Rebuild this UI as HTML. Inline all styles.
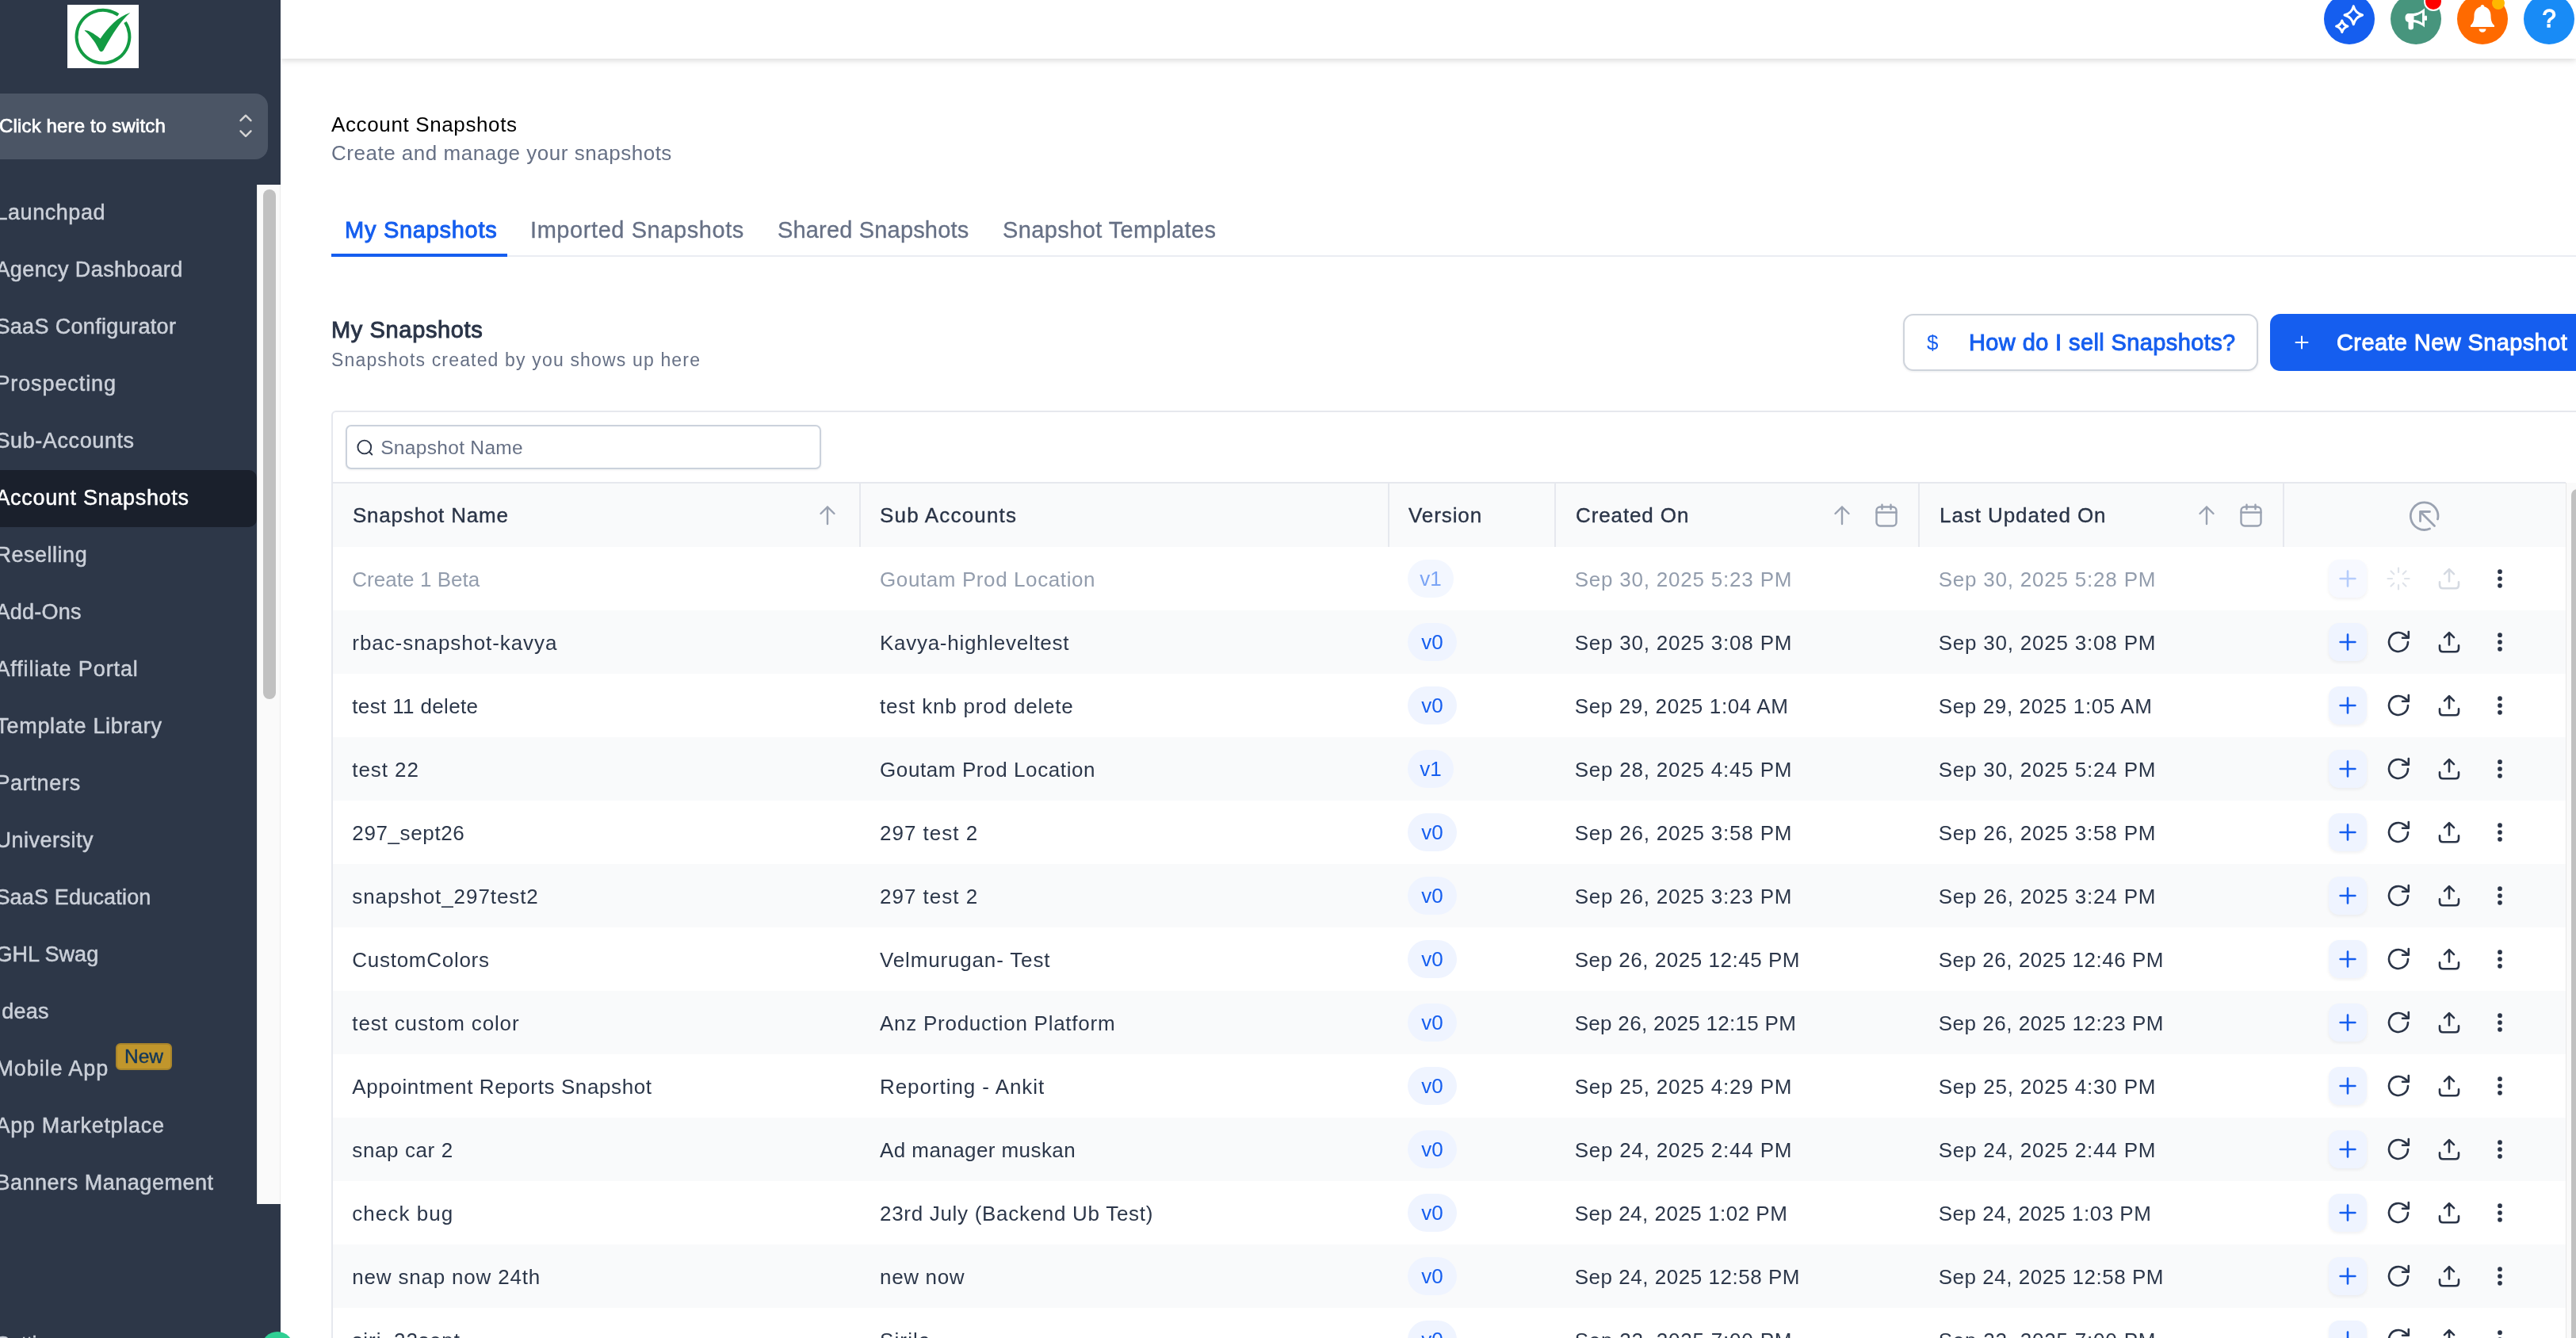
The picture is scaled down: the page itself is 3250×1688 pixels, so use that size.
<!DOCTYPE html>
<html lang="en"><head><meta charset="utf-8"><title>Account Snapshots</title>
<style>
*{box-sizing:border-box;margin:0;padding:0}
html,body{width:3250px;height:1688px;overflow:hidden;background:#fff}
body{position:relative;font-family:"Liberation Sans",sans-serif;color:#2a3447;}
#root{position:absolute;left:0;top:0;width:3250px;height:1688px;overflow:hidden;will-change:transform}
.abs{position:absolute}
.t{white-space:nowrap;display:inline-block}
#side{position:absolute;left:0;top:0;width:354px;height:1688px;background:#2d3748;overflow:hidden}
#logo{position:absolute;left:85px;top:6px;width:90px;height:80px;background:#fff}
#switch{position:absolute;left:-20px;top:118px;width:358px;height:83px;border-radius:16px;background:#4b5565}
#switch .lbl{position:absolute;left:19px;top:-1.4px;height:83px;line-height:83px;font-size:24px;color:#fff;-webkit-text-stroke:0.7px #fff}
.nav{position:absolute;left:-5.6px;height:72px;line-height:72px;font-size:27px;color:#cbd0d9;-webkit-text-stroke:0.5px #cbd0d9}
#active{position:absolute;left:-20px;top:593.4px;width:344px;height:71.6px;border-radius:10px;background:#1a202c}
.nav.on{color:#fff;-webkit-text-stroke:0.5px #fff}
#strack{position:absolute;left:324px;top:233px;width:30px;height:1286px;background:#fafafa;border-left:1px solid #e9e9e9;border-right:1px solid #ececec}
#sthumb{position:absolute;left:332px;top:239px;width:16px;height:643px;border-radius:8px;background:#c1c1c1}
#newb{position:absolute;left:146px;top:1316px;width:71px;height:34px;border-radius:6px;background:#c1962c;border:2px solid #a8842b;color:#12375a;font-size:24.5px;line-height:30px;text-align:center;-webkit-text-stroke:0.4px #12375a}
#head{position:absolute;left:354px;top:0;width:2896px;height:74px;background:#fff;box-shadow:0 2px 8px rgba(0,0,0,.16)}
.circ{position:absolute;top:-8px;width:64px;height:64px;border-radius:50%}
.ln{position:absolute;white-space:nowrap}

.title{left:418px;top:142px;height:30px;line-height:30px;font-size:26px;color:#000}
.sub{left:418px;top:178px;height:30px;line-height:30px;font-size:26px;color:#667085}
.tab{top:272px;height:36px;line-height:36px;font-size:29px;color:#667085;-webkit-text-stroke:0.3px #667085}
.tab.on{color:#155eef;-webkit-text-stroke:0.95px #155eef}
.h2{left:418px;top:398px;height:36px;line-height:36px;font-size:29px;color:#2a3447;-webkit-text-stroke:0.95px #2a3447}
.sub2{left:418px;top:439px;height:30px;line-height:30px;font-size:23px;color:#667085}
#btn1{position:absolute;left:2400.5px;top:396px;width:448px;height:72px;border:2px solid #cfd4dc;border-radius:13px;background:#fff;box-shadow:0 1px 3px rgba(16,24,40,.08)}
#btn2{position:absolute;left:2864px;top:396px;width:420px;height:72px;border-radius:13px;background:#155eef}
.btxt{top:414px;height:36px;line-height:36px;font-size:29px}
#card{position:absolute;left:418px;top:518px;width:2860px;height:1300px;border:2px solid #e6e8ee;border-radius:6px}
#search{position:absolute;left:436px;top:536px;width:600px;height:56px;border:2px solid #cbd2dc;border-radius:7px;background:#fff;box-shadow:0 1px 3px rgba(16,24,40,.07)}
.ph{left:480.2px;top:549.8px;height:30px;line-height:30px;font-size:24.5px;color:#667085}
#thead{position:absolute;left:420px;top:608px;width:2817px;height:82px;background:#f9fafb;border-top:2px solid #e6e8ee}
.vsep{position:absolute;top:610px;width:2px;height:80px;background:#e6e8ee}
.th{top:634px;height:32px;line-height:32px;font-size:26px;color:#2a3447;-webkit-text-stroke:0.35px #2a3447}
.row{position:absolute;left:420px;width:2817px;height:80px}
.row.alt{background:#f9fafb}
.td{height:32px;line-height:32px;font-size:26px;color:#2c374a}
.dis .td{color:#939dad}
.pill{position:absolute;height:48px;border-radius:24px;background:#eff4ff;color:#155eef;font-size:26px;line-height:48px;text-align:center}
.dis .pill{color:#7ba4f5;background:#f3f7ff}
.plus{position:absolute;width:48px;height:48px;border-radius:13px;background:#eff4ff;box-shadow:0 2px 4px rgba(16,24,40,.06)}
.dis .plus{background:#f7f9ff}
#vtrack{position:absolute;left:3237px;top:609px;width:13px;height:1100px;background:#fafafa;border-left:1px solid #e8e8e8}
#vthumb{position:absolute;left:3244px;top:617px;width:16px;height:1200px;border-radius:8px;background:#c1c1c1}
</style></head>
<body>
<div id="root"><div class="ln title"><span id="title" class="t " style="letter-spacing:0.625px;">Account Snapshots</span></div><div class="ln sub"><span id="sub" class="t " style="letter-spacing:0.516px;">Create and manage your snapshots</span></div><div class="abs" style="left:418px;top:322px;width:2900px;height:2px;background:#eaecf2"></div><div class="abs" style="left:418px;top:320px;width:222px;height:4px;background:#155eef"></div><div class="ln tab on" style="left:435px"><span id="tab0" class="t " style="letter-spacing:0.727px;">My Snapshots</span></div><div class="ln tab" style="left:669px"><span id="tab1" class="t " style="letter-spacing:0.576px;">Imported Snapshots</span></div><div class="ln tab" style="left:981px"><span id="tab2" class="t " style="letter-spacing:0.173px;">Shared Snapshots</span></div><div class="ln tab" style="left:1265px"><span id="tab3" class="t " style="letter-spacing:0.400px;">Snapshot Templates</span></div><div class="ln h2"><span id="h2" class="t " style="letter-spacing:0.636px;">My Snapshots</span></div><div class="ln sub2"><span id="sub2" class="t " style="letter-spacing:1.162px;">Snapshots created by you shows up here</span></div><div id="btn1"></div><div id="btn2"></div><div class="ln btxt" style="left:2431px;color:#155eef;font-weight:normal;font-size:26px">$</div><div class="ln btxt" style="left:2484px;color:#155eef;-webkit-text-stroke:0.95px #155eef"><span id="b1" class="t " style="letter-spacing:0.391px;">How do I sell Snapshots?</span></div><svg class="abs" style="left:2892px;top:420px" width="24" height="24" viewBox="0 0 24 24" fill="none" stroke="#fff" stroke-width="2" stroke-linecap="round"><path d="M12 4.5 L12 19.5 M4.5 12 L19.5 12"/></svg><div class="ln btxt" style="left:2948px;color:#fff;-webkit-text-stroke:0.95px #fff"><span id="b2" class="t " style="letter-spacing:0.389px;">Create New Snapshot</span></div><div id="card"></div><div id="search"></div><svg class="abs" style="left:448px;top:552px" width="26" height="26" viewBox="0 0 26 26" fill="none" stroke="#2a3447" stroke-width="1.9" stroke-linecap="round"><circle cx="11.8" cy="12" r="8.4"/><path d="M18 18.2 L21.3 21.5"/></svg><div class="ln ph"><span id="ph" class="t " style="letter-spacing:0.317px;">Snapshot Name</span></div><div id="thead"></div><div class="vsep" style="left:1084px"></div><div class="vsep" style="left:1751px"></div><div class="vsep" style="left:1961px"></div><div class="vsep" style="left:2420px"></div><div class="vsep" style="left:2880px"></div><div class="ln th" style="left:445px"><span id="th0" class="t " style="letter-spacing:0.783px;">Snapshot Name</span></div><div class="ln th" style="left:1110px"><span id="th1" class="t " style="letter-spacing:1.182px;">Sub Accounts</span></div><div class="ln th" style="left:1777px"><span id="th2" class="t " style="letter-spacing:0.900px;">Version</span></div><div class="ln th" style="left:1988px"><span id="th3" class="t " style="letter-spacing:0.889px;">Created On</span></div><div class="ln th" style="left:2447px"><span id="th4" class="t " style="letter-spacing:0.929px;">Last Updated On</span></div><svg class="abs" style="left:1030px;top:636px" width="28" height="28" viewBox="0 0 28 28" fill="none" stroke="#9aa2b1" stroke-width="2.4" stroke-linecap="round" stroke-linejoin="round"><path d="M14 25 L14 3.5 M5.5 12 L14 3.5 L22.5 12"/></svg><svg class="abs" style="left:2310px;top:636px" width="28" height="28" viewBox="0 0 28 28" fill="none" stroke="#9aa2b1" stroke-width="2.4" stroke-linecap="round" stroke-linejoin="round"><path d="M14 25 L14 3.5 M5.5 12 L14 3.5 L22.5 12"/></svg><svg class="abs" style="left:2365px;top:634px" width="30" height="32" viewBox="0 0 30 32" fill="none" stroke="#9aa2b1" stroke-width="2.4" stroke-linecap="round" stroke-linejoin="round"><rect x="2.5" y="5.5" width="25" height="24" rx="4.5"/><path d="M2.5 12.5 L27.5 12.5 M9.5 2.8 L9.5 8.2 M20.5 2.8 L20.5 8.2"/></svg><svg class="abs" style="left:2770px;top:636px" width="28" height="28" viewBox="0 0 28 28" fill="none" stroke="#9aa2b1" stroke-width="2.4" stroke-linecap="round" stroke-linejoin="round"><path d="M14 25 L14 3.5 M5.5 12 L14 3.5 L22.5 12"/></svg><svg class="abs" style="left:2825px;top:634px" width="30" height="32" viewBox="0 0 30 32" fill="none" stroke="#9aa2b1" stroke-width="2.4" stroke-linecap="round" stroke-linejoin="round"><rect x="2.5" y="5.5" width="25" height="24" rx="4.5"/><path d="M2.5 12.5 L27.5 12.5 M9.5 2.8 L9.5 8.2 M20.5 2.8 L20.5 8.2"/></svg><svg class="abs" style="left:3038px;top:630px" width="42" height="42" viewBox="0 0 42 42" fill="none" stroke="#9aa2b1" stroke-width="2.8" stroke-linecap="round" stroke-linejoin="round"><path d="M27.5 37 A17.3 17.3 0 1 1 37.5 25"/><path d="M33.5 33.5 L15.5 15.5 M15.5 27.5 L15.5 15.5 L27.5 15.5"/></svg><div class="row dis" style="top:690px"><div class="ln td" style="left:24.30000000000001px;top:24.5px"><span id="r0c0" class="t " style="letter-spacing:0.050px;">Create 1 Beta</span></div><div class="ln td" style="left:690px;top:24.5px"><span id="r0c1" class="t " style="letter-spacing:0.600px;">Goutam Prod Location</span></div><div class="pill" style="left:1356px;top:16px;width:58px">v1</div><div class="ln td" style="left:1566.7px;top:24.5px"><span id="r0c3" class="t " style="letter-spacing:0.789px;">Sep 30, 2025 5:23 PM</span></div><div class="ln td" style="left:2025.6999999999998px;top:24.5px"><span id="r0c4" class="t " style="letter-spacing:0.789px;">Sep 30, 2025 5:28 PM</span></div><div class="plus" style="left:2518px;top:16px"><svg width="48" height="48" viewBox="0 0 48 48" fill="none" stroke="#b5ccfb" stroke-width="2.6" stroke-linecap="round"><path d="M24 14.6 L24 33.4 M14.6 24 L33.4 24"/></svg></div><svg class="abs" style="left:2590px;top:24px" width="32" height="32" viewBox="0 0 32 32" fill="none" stroke="#dfe3ea" stroke-width="2.2" stroke-linecap="round"><path d="M16 2.5 L16 8 M16 24 L16 29.5 M2.5 16 L8 16 M24 16 L29.5 16 M6.5 6.5 L10.3 10.3 M21.7 21.7 L25.5 25.5 M6.5 25.5 L10.3 21.7 M21.7 10.3 L25.5 6.5"/></svg><svg class="abs" style="left:2654px;top:24px" width="32" height="32" viewBox="0 0 32 32" fill="none" stroke="#d5dae2" stroke-width="2.6" stroke-linecap="round" stroke-linejoin="round"><path d="M16 19.5 L16 4.2 M10 10.2 L16 4.2 L22 10.2"/><path d="M4 20.2 L4 24 Q4 28.2 8.2 28.2 L23.8 28.2 Q28 28.2 28 24 L28 20.2"/></svg><svg class="abs" style="left:2726px;top:24px" width="16" height="32" viewBox="0 0 16 32" fill="#2a3447"><circle cx="8" cy="7.2" r="2.85"/><circle cx="8" cy="16" r="2.85"/><circle cx="8" cy="24.8" r="2.85"/></svg></div><div class="row alt" style="top:770px"><div class="ln td" style="left:24.30000000000001px;top:24.5px"><span id="r1c0" class="t " style="letter-spacing:0.933px;">rbac-snapshot-kavya</span></div><div class="ln td" style="left:690px;top:24.5px"><span id="r1c1" class="t " style="letter-spacing:0.722px;">Kavya-highleveltest</span></div><div class="pill" style="left:1356px;top:16px;width:62px">v0</div><div class="ln td" style="left:1566.7px;top:24.5px"><span id="r1c3" class="t " style="letter-spacing:0.789px;">Sep 30, 2025 3:08 PM</span></div><div class="ln td" style="left:2025.6999999999998px;top:24.5px"><span id="r1c4" class="t " style="letter-spacing:0.789px;">Sep 30, 2025 3:08 PM</span></div><div class="plus" style="left:2518px;top:16px"><svg width="48" height="48" viewBox="0 0 48 48" fill="none" stroke="#155eef" stroke-width="2.6" stroke-linecap="round"><path d="M24 14.6 L24 33.4 M14.6 24 L33.4 24"/></svg></div><svg class="abs" style="left:2590px;top:24px" width="32" height="32" viewBox="0 0 32 32" fill="none" stroke="#2a3447" stroke-width="2.6" stroke-linecap="round" stroke-linejoin="round"><path d="M28 16 A12 12 0 1 1 23.2 6.4 L28.5 10.5"/><path d="M28.8 3 L28.8 10.8 L21 10.8"/></svg><svg class="abs" style="left:2654px;top:24px" width="32" height="32" viewBox="0 0 32 32" fill="none" stroke="#2a3447" stroke-width="2.6" stroke-linecap="round" stroke-linejoin="round"><path d="M16 19.5 L16 4.2 M10 10.2 L16 4.2 L22 10.2"/><path d="M4 20.2 L4 24 Q4 28.2 8.2 28.2 L23.8 28.2 Q28 28.2 28 24 L28 20.2"/></svg><svg class="abs" style="left:2726px;top:24px" width="16" height="32" viewBox="0 0 16 32" fill="#2a3447"><circle cx="8" cy="7.2" r="2.85"/><circle cx="8" cy="16" r="2.85"/><circle cx="8" cy="24.8" r="2.85"/></svg></div><div class="row" style="top:850px"><div class="ln td" style="left:24.30000000000001px;top:24.5px"><span id="r2c0" class="t " style="letter-spacing:0.354px;">test 11 delete</span></div><div class="ln td" style="left:690px;top:24.5px"><span id="r2c1" class="t " style="letter-spacing:0.811px;">test knb prod delete</span></div><div class="pill" style="left:1356px;top:16px;width:62px">v0</div><div class="ln td" style="left:1566.7px;top:24.5px"><span id="r2c3" class="t " style="letter-spacing:0.632px;">Sep 29, 2025 1:04 AM</span></div><div class="ln td" style="left:2025.6999999999998px;top:24.5px"><span id="r2c4" class="t " style="letter-spacing:0.632px;">Sep 29, 2025 1:05 AM</span></div><div class="plus" style="left:2518px;top:16px"><svg width="48" height="48" viewBox="0 0 48 48" fill="none" stroke="#155eef" stroke-width="2.6" stroke-linecap="round"><path d="M24 14.6 L24 33.4 M14.6 24 L33.4 24"/></svg></div><svg class="abs" style="left:2590px;top:24px" width="32" height="32" viewBox="0 0 32 32" fill="none" stroke="#2a3447" stroke-width="2.6" stroke-linecap="round" stroke-linejoin="round"><path d="M28 16 A12 12 0 1 1 23.2 6.4 L28.5 10.5"/><path d="M28.8 3 L28.8 10.8 L21 10.8"/></svg><svg class="abs" style="left:2654px;top:24px" width="32" height="32" viewBox="0 0 32 32" fill="none" stroke="#2a3447" stroke-width="2.6" stroke-linecap="round" stroke-linejoin="round"><path d="M16 19.5 L16 4.2 M10 10.2 L16 4.2 L22 10.2"/><path d="M4 20.2 L4 24 Q4 28.2 8.2 28.2 L23.8 28.2 Q28 28.2 28 24 L28 20.2"/></svg><svg class="abs" style="left:2726px;top:24px" width="16" height="32" viewBox="0 0 16 32" fill="#2a3447"><circle cx="8" cy="7.2" r="2.85"/><circle cx="8" cy="16" r="2.85"/><circle cx="8" cy="24.8" r="2.85"/></svg></div><div class="row alt" style="top:930px"><div class="ln td" style="left:24.30000000000001px;top:24.5px"><span id="r3c0" class="t " style="letter-spacing:0.933px;">test 22</span></div><div class="ln td" style="left:690px;top:24.5px"><span id="r3c1" class="t " style="letter-spacing:0.600px;">Goutam Prod Location</span></div><div class="pill" style="left:1356px;top:16px;width:58px">v1</div><div class="ln td" style="left:1566.7px;top:24.5px"><span id="r3c3" class="t " style="letter-spacing:0.789px;">Sep 28, 2025 4:45 PM</span></div><div class="ln td" style="left:2025.6999999999998px;top:24.5px"><span id="r3c4" class="t " style="letter-spacing:0.789px;">Sep 30, 2025 5:24 PM</span></div><div class="plus" style="left:2518px;top:16px"><svg width="48" height="48" viewBox="0 0 48 48" fill="none" stroke="#155eef" stroke-width="2.6" stroke-linecap="round"><path d="M24 14.6 L24 33.4 M14.6 24 L33.4 24"/></svg></div><svg class="abs" style="left:2590px;top:24px" width="32" height="32" viewBox="0 0 32 32" fill="none" stroke="#2a3447" stroke-width="2.6" stroke-linecap="round" stroke-linejoin="round"><path d="M28 16 A12 12 0 1 1 23.2 6.4 L28.5 10.5"/><path d="M28.8 3 L28.8 10.8 L21 10.8"/></svg><svg class="abs" style="left:2654px;top:24px" width="32" height="32" viewBox="0 0 32 32" fill="none" stroke="#2a3447" stroke-width="2.6" stroke-linecap="round" stroke-linejoin="round"><path d="M16 19.5 L16 4.2 M10 10.2 L16 4.2 L22 10.2"/><path d="M4 20.2 L4 24 Q4 28.2 8.2 28.2 L23.8 28.2 Q28 28.2 28 24 L28 20.2"/></svg><svg class="abs" style="left:2726px;top:24px" width="16" height="32" viewBox="0 0 16 32" fill="#2a3447"><circle cx="8" cy="7.2" r="2.85"/><circle cx="8" cy="16" r="2.85"/><circle cx="8" cy="24.8" r="2.85"/></svg></div><div class="row" style="top:1010px"><div class="ln td" style="left:24.30000000000001px;top:24.5px"><span id="r4c0" class="t " style="letter-spacing:0.622px;">297_sept26</span></div><div class="ln td" style="left:690px;top:24.5px"><span id="r4c1" class="t " style="letter-spacing:1.000px;">297 test 2</span></div><div class="pill" style="left:1356px;top:16px;width:62px">v0</div><div class="ln td" style="left:1566.7px;top:24.5px"><span id="r4c3" class="t " style="letter-spacing:0.789px;">Sep 26, 2025 3:58 PM</span></div><div class="ln td" style="left:2025.6999999999998px;top:24.5px"><span id="r4c4" class="t " style="letter-spacing:0.789px;">Sep 26, 2025 3:58 PM</span></div><div class="plus" style="left:2518px;top:16px"><svg width="48" height="48" viewBox="0 0 48 48" fill="none" stroke="#155eef" stroke-width="2.6" stroke-linecap="round"><path d="M24 14.6 L24 33.4 M14.6 24 L33.4 24"/></svg></div><svg class="abs" style="left:2590px;top:24px" width="32" height="32" viewBox="0 0 32 32" fill="none" stroke="#2a3447" stroke-width="2.6" stroke-linecap="round" stroke-linejoin="round"><path d="M28 16 A12 12 0 1 1 23.2 6.4 L28.5 10.5"/><path d="M28.8 3 L28.8 10.8 L21 10.8"/></svg><svg class="abs" style="left:2654px;top:24px" width="32" height="32" viewBox="0 0 32 32" fill="none" stroke="#2a3447" stroke-width="2.6" stroke-linecap="round" stroke-linejoin="round"><path d="M16 19.5 L16 4.2 M10 10.2 L16 4.2 L22 10.2"/><path d="M4 20.2 L4 24 Q4 28.2 8.2 28.2 L23.8 28.2 Q28 28.2 28 24 L28 20.2"/></svg><svg class="abs" style="left:2726px;top:24px" width="16" height="32" viewBox="0 0 16 32" fill="#2a3447"><circle cx="8" cy="7.2" r="2.85"/><circle cx="8" cy="16" r="2.85"/><circle cx="8" cy="24.8" r="2.85"/></svg></div><div class="row alt" style="top:1090px"><div class="ln td" style="left:24.30000000000001px;top:24.5px"><span id="r5c0" class="t " style="letter-spacing:0.925px;">snapshot_297test2</span></div><div class="ln td" style="left:690px;top:24.5px"><span id="r5c1" class="t " style="letter-spacing:1.000px;">297 test 2</span></div><div class="pill" style="left:1356px;top:16px;width:62px">v0</div><div class="ln td" style="left:1566.7px;top:24.5px"><span id="r5c3" class="t " style="letter-spacing:0.789px;">Sep 26, 2025 3:23 PM</span></div><div class="ln td" style="left:2025.6999999999998px;top:24.5px"><span id="r5c4" class="t " style="letter-spacing:0.789px;">Sep 26, 2025 3:24 PM</span></div><div class="plus" style="left:2518px;top:16px"><svg width="48" height="48" viewBox="0 0 48 48" fill="none" stroke="#155eef" stroke-width="2.6" stroke-linecap="round"><path d="M24 14.6 L24 33.4 M14.6 24 L33.4 24"/></svg></div><svg class="abs" style="left:2590px;top:24px" width="32" height="32" viewBox="0 0 32 32" fill="none" stroke="#2a3447" stroke-width="2.6" stroke-linecap="round" stroke-linejoin="round"><path d="M28 16 A12 12 0 1 1 23.2 6.4 L28.5 10.5"/><path d="M28.8 3 L28.8 10.8 L21 10.8"/></svg><svg class="abs" style="left:2654px;top:24px" width="32" height="32" viewBox="0 0 32 32" fill="none" stroke="#2a3447" stroke-width="2.6" stroke-linecap="round" stroke-linejoin="round"><path d="M16 19.5 L16 4.2 M10 10.2 L16 4.2 L22 10.2"/><path d="M4 20.2 L4 24 Q4 28.2 8.2 28.2 L23.8 28.2 Q28 28.2 28 24 L28 20.2"/></svg><svg class="abs" style="left:2726px;top:24px" width="16" height="32" viewBox="0 0 16 32" fill="#2a3447"><circle cx="8" cy="7.2" r="2.85"/><circle cx="8" cy="16" r="2.85"/><circle cx="8" cy="24.8" r="2.85"/></svg></div><div class="row" style="top:1170px"><div class="ln td" style="left:24.30000000000001px;top:24.5px"><span id="r6c0" class="t " style="letter-spacing:0.727px;">CustomColors</span></div><div class="ln td" style="left:690px;top:24.5px"><span id="r6c1" class="t " style="letter-spacing:0.840px;">Velmurugan- Test</span></div><div class="pill" style="left:1356px;top:16px;width:62px">v0</div><div class="ln td" style="left:1566.7px;top:24.5px"><span id="r6c3" class="t " style="letter-spacing:0.530px;">Sep 26, 2025 12:45 PM</span></div><div class="ln td" style="left:2025.6999999999998px;top:24.5px"><span id="r6c4" class="t " style="letter-spacing:0.530px;">Sep 26, 2025 12:46 PM</span></div><div class="plus" style="left:2518px;top:16px"><svg width="48" height="48" viewBox="0 0 48 48" fill="none" stroke="#155eef" stroke-width="2.6" stroke-linecap="round"><path d="M24 14.6 L24 33.4 M14.6 24 L33.4 24"/></svg></div><svg class="abs" style="left:2590px;top:24px" width="32" height="32" viewBox="0 0 32 32" fill="none" stroke="#2a3447" stroke-width="2.6" stroke-linecap="round" stroke-linejoin="round"><path d="M28 16 A12 12 0 1 1 23.2 6.4 L28.5 10.5"/><path d="M28.8 3 L28.8 10.8 L21 10.8"/></svg><svg class="abs" style="left:2654px;top:24px" width="32" height="32" viewBox="0 0 32 32" fill="none" stroke="#2a3447" stroke-width="2.6" stroke-linecap="round" stroke-linejoin="round"><path d="M16 19.5 L16 4.2 M10 10.2 L16 4.2 L22 10.2"/><path d="M4 20.2 L4 24 Q4 28.2 8.2 28.2 L23.8 28.2 Q28 28.2 28 24 L28 20.2"/></svg><svg class="abs" style="left:2726px;top:24px" width="16" height="32" viewBox="0 0 16 32" fill="#2a3447"><circle cx="8" cy="7.2" r="2.85"/><circle cx="8" cy="16" r="2.85"/><circle cx="8" cy="24.8" r="2.85"/></svg></div><div class="row alt" style="top:1250px"><div class="ln td" style="left:24.30000000000001px;top:24.5px"><span id="r7c0" class="t " style="letter-spacing:0.862px;">test custom color</span></div><div class="ln td" style="left:690px;top:24.5px"><span id="r7c1" class="t " style="letter-spacing:0.736px;">Anz Production Platform</span></div><div class="pill" style="left:1356px;top:16px;width:62px">v0</div><div class="ln td" style="left:1566.7px;top:24.5px"><span id="r7c3" class="t " style="letter-spacing:0.300px;">Sep 26, 2025 12:15 PM</span></div><div class="ln td" style="left:2025.6999999999998px;top:24.5px"><span id="r7c4" class="t " style="letter-spacing:0.530px;">Sep 26, 2025 12:23 PM</span></div><div class="plus" style="left:2518px;top:16px"><svg width="48" height="48" viewBox="0 0 48 48" fill="none" stroke="#155eef" stroke-width="2.6" stroke-linecap="round"><path d="M24 14.6 L24 33.4 M14.6 24 L33.4 24"/></svg></div><svg class="abs" style="left:2590px;top:24px" width="32" height="32" viewBox="0 0 32 32" fill="none" stroke="#2a3447" stroke-width="2.6" stroke-linecap="round" stroke-linejoin="round"><path d="M28 16 A12 12 0 1 1 23.2 6.4 L28.5 10.5"/><path d="M28.8 3 L28.8 10.8 L21 10.8"/></svg><svg class="abs" style="left:2654px;top:24px" width="32" height="32" viewBox="0 0 32 32" fill="none" stroke="#2a3447" stroke-width="2.6" stroke-linecap="round" stroke-linejoin="round"><path d="M16 19.5 L16 4.2 M10 10.2 L16 4.2 L22 10.2"/><path d="M4 20.2 L4 24 Q4 28.2 8.2 28.2 L23.8 28.2 Q28 28.2 28 24 L28 20.2"/></svg><svg class="abs" style="left:2726px;top:24px" width="16" height="32" viewBox="0 0 16 32" fill="#2a3447"><circle cx="8" cy="7.2" r="2.85"/><circle cx="8" cy="16" r="2.85"/><circle cx="8" cy="24.8" r="2.85"/></svg></div><div class="row" style="top:1330px"><div class="ln td" style="left:24.30000000000001px;top:24.5px"><span id="r8c0" class="t " style="letter-spacing:0.607px;">Appointment Reports Snapshot</span></div><div class="ln td" style="left:690px;top:24.5px"><span id="r8c1" class="t " style="letter-spacing:0.938px;">Reporting - Ankit</span></div><div class="pill" style="left:1356px;top:16px;width:62px">v0</div><div class="ln td" style="left:1566.7px;top:24.5px"><span id="r8c3" class="t " style="letter-spacing:0.789px;">Sep 25, 2025 4:29 PM</span></div><div class="ln td" style="left:2025.6999999999998px;top:24.5px"><span id="r8c4" class="t " style="letter-spacing:0.789px;">Sep 25, 2025 4:30 PM</span></div><div class="plus" style="left:2518px;top:16px"><svg width="48" height="48" viewBox="0 0 48 48" fill="none" stroke="#155eef" stroke-width="2.6" stroke-linecap="round"><path d="M24 14.6 L24 33.4 M14.6 24 L33.4 24"/></svg></div><svg class="abs" style="left:2590px;top:24px" width="32" height="32" viewBox="0 0 32 32" fill="none" stroke="#2a3447" stroke-width="2.6" stroke-linecap="round" stroke-linejoin="round"><path d="M28 16 A12 12 0 1 1 23.2 6.4 L28.5 10.5"/><path d="M28.8 3 L28.8 10.8 L21 10.8"/></svg><svg class="abs" style="left:2654px;top:24px" width="32" height="32" viewBox="0 0 32 32" fill="none" stroke="#2a3447" stroke-width="2.6" stroke-linecap="round" stroke-linejoin="round"><path d="M16 19.5 L16 4.2 M10 10.2 L16 4.2 L22 10.2"/><path d="M4 20.2 L4 24 Q4 28.2 8.2 28.2 L23.8 28.2 Q28 28.2 28 24 L28 20.2"/></svg><svg class="abs" style="left:2726px;top:24px" width="16" height="32" viewBox="0 0 16 32" fill="#2a3447"><circle cx="8" cy="7.2" r="2.85"/><circle cx="8" cy="16" r="2.85"/><circle cx="8" cy="24.8" r="2.85"/></svg></div><div class="row alt" style="top:1410px"><div class="ln td" style="left:24.30000000000001px;top:24.5px"><span id="r9c0" class="t " style="letter-spacing:0.600px;">snap car 2</span></div><div class="ln td" style="left:690px;top:24.5px"><span id="r9c1" class="t " style="letter-spacing:0.425px;">Ad manager muskan</span></div><div class="pill" style="left:1356px;top:16px;width:62px">v0</div><div class="ln td" style="left:1566.7px;top:24.5px"><span id="r9c3" class="t " style="letter-spacing:0.789px;">Sep 24, 2025 2:44 PM</span></div><div class="ln td" style="left:2025.6999999999998px;top:24.5px"><span id="r9c4" class="t " style="letter-spacing:0.789px;">Sep 24, 2025 2:44 PM</span></div><div class="plus" style="left:2518px;top:16px"><svg width="48" height="48" viewBox="0 0 48 48" fill="none" stroke="#155eef" stroke-width="2.6" stroke-linecap="round"><path d="M24 14.6 L24 33.4 M14.6 24 L33.4 24"/></svg></div><svg class="abs" style="left:2590px;top:24px" width="32" height="32" viewBox="0 0 32 32" fill="none" stroke="#2a3447" stroke-width="2.6" stroke-linecap="round" stroke-linejoin="round"><path d="M28 16 A12 12 0 1 1 23.2 6.4 L28.5 10.5"/><path d="M28.8 3 L28.8 10.8 L21 10.8"/></svg><svg class="abs" style="left:2654px;top:24px" width="32" height="32" viewBox="0 0 32 32" fill="none" stroke="#2a3447" stroke-width="2.6" stroke-linecap="round" stroke-linejoin="round"><path d="M16 19.5 L16 4.2 M10 10.2 L16 4.2 L22 10.2"/><path d="M4 20.2 L4 24 Q4 28.2 8.2 28.2 L23.8 28.2 Q28 28.2 28 24 L28 20.2"/></svg><svg class="abs" style="left:2726px;top:24px" width="16" height="32" viewBox="0 0 16 32" fill="#2a3447"><circle cx="8" cy="7.2" r="2.85"/><circle cx="8" cy="16" r="2.85"/><circle cx="8" cy="24.8" r="2.85"/></svg></div><div class="row" style="top:1490px"><div class="ln td" style="left:24.30000000000001px;top:24.5px"><span id="r10c0" class="t " style="letter-spacing:1.050px;">check bug</span></div><div class="ln td" style="left:690px;top:24.5px"><span id="r10c1" class="t " style="letter-spacing:0.700px;">23rd July (Backend Ub Test)</span></div><div class="pill" style="left:1356px;top:16px;width:62px">v0</div><div class="ln td" style="left:1566.7px;top:24.5px"><span id="r10c3" class="t " style="letter-spacing:0.495px;">Sep 24, 2025 1:02 PM</span></div><div class="ln td" style="left:2025.6999999999998px;top:24.5px"><span id="r10c4" class="t " style="letter-spacing:0.495px;">Sep 24, 2025 1:03 PM</span></div><div class="plus" style="left:2518px;top:16px"><svg width="48" height="48" viewBox="0 0 48 48" fill="none" stroke="#155eef" stroke-width="2.6" stroke-linecap="round"><path d="M24 14.6 L24 33.4 M14.6 24 L33.4 24"/></svg></div><svg class="abs" style="left:2590px;top:24px" width="32" height="32" viewBox="0 0 32 32" fill="none" stroke="#2a3447" stroke-width="2.6" stroke-linecap="round" stroke-linejoin="round"><path d="M28 16 A12 12 0 1 1 23.2 6.4 L28.5 10.5"/><path d="M28.8 3 L28.8 10.8 L21 10.8"/></svg><svg class="abs" style="left:2654px;top:24px" width="32" height="32" viewBox="0 0 32 32" fill="none" stroke="#2a3447" stroke-width="2.6" stroke-linecap="round" stroke-linejoin="round"><path d="M16 19.5 L16 4.2 M10 10.2 L16 4.2 L22 10.2"/><path d="M4 20.2 L4 24 Q4 28.2 8.2 28.2 L23.8 28.2 Q28 28.2 28 24 L28 20.2"/></svg><svg class="abs" style="left:2726px;top:24px" width="16" height="32" viewBox="0 0 16 32" fill="#2a3447"><circle cx="8" cy="7.2" r="2.85"/><circle cx="8" cy="16" r="2.85"/><circle cx="8" cy="24.8" r="2.85"/></svg></div><div class="row alt" style="top:1570px"><div class="ln td" style="left:24.30000000000001px;top:24.5px"><span id="r11c0" class="t " style="letter-spacing:0.800px;">new snap now 24th</span></div><div class="ln td" style="left:690px;top:24.5px"><span id="r11c1" class="t " style="letter-spacing:0.667px;">new now</span></div><div class="pill" style="left:1356px;top:16px;width:62px">v0</div><div class="ln td" style="left:1566.7px;top:24.5px"><span id="r11c3" class="t " style="letter-spacing:0.530px;">Sep 24, 2025 12:58 PM</span></div><div class="ln td" style="left:2025.6999999999998px;top:24.5px"><span id="r11c4" class="t " style="letter-spacing:0.530px;">Sep 24, 2025 12:58 PM</span></div><div class="plus" style="left:2518px;top:16px"><svg width="48" height="48" viewBox="0 0 48 48" fill="none" stroke="#155eef" stroke-width="2.6" stroke-linecap="round"><path d="M24 14.6 L24 33.4 M14.6 24 L33.4 24"/></svg></div><svg class="abs" style="left:2590px;top:24px" width="32" height="32" viewBox="0 0 32 32" fill="none" stroke="#2a3447" stroke-width="2.6" stroke-linecap="round" stroke-linejoin="round"><path d="M28 16 A12 12 0 1 1 23.2 6.4 L28.5 10.5"/><path d="M28.8 3 L28.8 10.8 L21 10.8"/></svg><svg class="abs" style="left:2654px;top:24px" width="32" height="32" viewBox="0 0 32 32" fill="none" stroke="#2a3447" stroke-width="2.6" stroke-linecap="round" stroke-linejoin="round"><path d="M16 19.5 L16 4.2 M10 10.2 L16 4.2 L22 10.2"/><path d="M4 20.2 L4 24 Q4 28.2 8.2 28.2 L23.8 28.2 Q28 28.2 28 24 L28 20.2"/></svg><svg class="abs" style="left:2726px;top:24px" width="16" height="32" viewBox="0 0 16 32" fill="#2a3447"><circle cx="8" cy="7.2" r="2.85"/><circle cx="8" cy="16" r="2.85"/><circle cx="8" cy="24.8" r="2.85"/></svg></div><div class="row" style="top:1650px"><div class="ln td" style="left:24.30000000000001px;top:24.5px"><span id="r12c0" class="t " style="letter-spacing:1.000px;">siri_22sept</span></div><div class="ln td" style="left:690px;top:24.5px"><span id="r12c1" class="t " style="letter-spacing:1.120px;">Sirila</span></div><div class="pill" style="left:1356px;top:16px;width:62px">v0</div><div class="ln td" style="left:1566.7px;top:24.5px"><span id="r12c3" class="t " style="letter-spacing:0.789px;">Sep 22, 2025 7:00 PM</span></div><div class="ln td" style="left:2025.6999999999998px;top:24.5px"><span id="r12c4" class="t " style="letter-spacing:0.789px;">Sep 22, 2025 7:00 PM</span></div><div class="plus" style="left:2518px;top:16px"><svg width="48" height="48" viewBox="0 0 48 48" fill="none" stroke="#155eef" stroke-width="2.6" stroke-linecap="round"><path d="M24 14.6 L24 33.4 M14.6 24 L33.4 24"/></svg></div><svg class="abs" style="left:2590px;top:24px" width="32" height="32" viewBox="0 0 32 32" fill="none" stroke="#2a3447" stroke-width="2.6" stroke-linecap="round" stroke-linejoin="round"><path d="M28 16 A12 12 0 1 1 23.2 6.4 L28.5 10.5"/><path d="M28.8 3 L28.8 10.8 L21 10.8"/></svg><svg class="abs" style="left:2654px;top:24px" width="32" height="32" viewBox="0 0 32 32" fill="none" stroke="#2a3447" stroke-width="2.6" stroke-linecap="round" stroke-linejoin="round"><path d="M16 19.5 L16 4.2 M10 10.2 L16 4.2 L22 10.2"/><path d="M4 20.2 L4 24 Q4 28.2 8.2 28.2 L23.8 28.2 Q28 28.2 28 24 L28 20.2"/></svg><svg class="abs" style="left:2726px;top:24px" width="16" height="32" viewBox="0 0 16 32" fill="#2a3447"><circle cx="8" cy="7.2" r="2.85"/><circle cx="8" cy="16" r="2.85"/><circle cx="8" cy="24.8" r="2.85"/></svg></div><div id="vtrack"></div><div id="vthumb"></div><div id="head"></div><div class="circ" style="left:2932px;background:#155eef"><svg width="64" height="64" viewBox="0 0 64 64" fill="none" stroke="#fff" stroke-width="3" stroke-linejoin="round">
<path d="M37.3 15.8 C38.8 22 42 25 48.6 27 C42 29.3 39.2 32 37.3 38.8 C35.6 32 32.8 29.3 26 27 C32.8 25 35.6 22 37.3 15.8 Z"/>
<path d="M22.8 34 C23.8 37.8 25.8 39.8 29.9 41.2 C25.8 42.6 23.8 44.6 22.8 48.6 C21.8 44.6 19.8 42.6 15.6 41.2 C19.8 39.8 21.8 37.8 22.8 34 Z"/></svg></div><div class="circ" style="left:3016px;background:#47957d"><svg width="64" height="64" viewBox="0 0 64 64">
<path d="M43 18.5 L43 42.5 C38 38 33 36.5 29 36.3 L29 42.5 C29 44.5 28 45.5 25.5 45.5 C23 45.5 22.5 44.5 22.5 42.5 L22.5 36 C19.5 35.5 18.5 33.5 18.5 30.5 C18.5 27 20 25 23.5 25 L29 25 C33 24.5 38 23 43 18.5 Z M40 24 C36.5 26.5 33 27.8 29.5 28.2 L29.5 33 C33 33.3 36.5 34.5 40 37 Z" fill="#fff" fill-rule="evenodd"/>
<rect x="43" y="27.5" width="3" height="6.5" rx="1.5" fill="#fff"/></svg></div><div class="abs" style="left:3058px;top:-10px;width:24px;height:24px;border-radius:50%;background:#fe0000;border:2px solid #fff"></div><div class="circ" style="left:3100px;background:#ff6a00"><svg width="64" height="64" viewBox="0 0 64 64">
<path d="M32 14 C33.4 14 34.4 15 34.4 16.4 C39.5 17.6 42.5 22 42.5 27.5 C42.5 34 44 37.5 47 40 L47 42 L17 42 L17 40 C20 37.5 21.5 34 21.5 27.5 C21.5 22 24.5 17.6 29.6 16.4 C29.6 15 30.6 14 32 14 Z" fill="#fff"/>
<path d="M27.5 44.5 L36.5 44.5 C36.5 47 34.5 48.8 32 48.8 C29.5 48.8 27.5 47 27.5 44.5 Z" fill="#fff"/></svg></div><div class="abs" style="left:3144px;top:-4px;width:16px;height:16px;border-radius:50%;background:#ffb800"></div><div class="circ" style="left:3184px;background:#188bf6;color:#fff;font-size:31px;line-height:64px;text-align:center;padding-top:0px;-webkit-text-stroke:1.3px #fff">?</div><div id="side"><div id="logo"><svg width="90" height="80" viewBox="0 0 90 80">
<path d="M73 22 A33.4 33.4 0 1 1 64.16 12.84" fill="none" stroke="#139b43" stroke-width="4"/>
<path d="M21.5 32.6 C24 31.4 30.5 33.8 41.6 42.8 C50.5 29.5 64 14.5 79.3 10 C67.5 20 56.5 37.5 46.6 55.5 C45.3 58.4 43.7 59.4 42.3 59.1 C40.8 58.8 40 57.5 39 55 C35 47 28.5 38.5 21.5 32.6 Z" fill="#139b43"/>
</svg></div><div id="switch"><div class="lbl"><span id="sw" class="t " style="letter-spacing:0.158px;">Click here to switch</span></div><svg class="abs" style="left:318px;top:24px" width="24" height="36" viewBox="0 0 24 36"><path d="M5.5 10.2 L12 3.7 L18.5 10.2 M5.5 23.3 L12 29.8 L18.5 23.3" fill="none" stroke="#d4d4d4" stroke-width="2.4" stroke-linecap="round" stroke-linejoin="round"/></svg></div><div id="active"></div><div class="nav" style="top:232.3px"><span id="nav0" class="t " style="letter-spacing:0.562px;">Launchpad</span></div><div class="nav" style="top:304.3px"><span id="nav1" class="t " style="letter-spacing:0.413px;">Agency Dashboard</span></div><div class="nav" style="top:376.3px"><span id="nav2" class="t " style="letter-spacing:0.338px;">SaaS Configurator</span></div><div class="nav" style="top:448.3px"><span id="nav3" class="t " style="letter-spacing:0.900px;">Prospecting</span></div><div class="nav" style="top:520.3px"><span id="nav4" class="t " style="letter-spacing:0.600px;">Sub-Accounts</span></div><div class="nav on" style="top:592.3px"><span id="nav5" class="t " style="letter-spacing:0.681px;">Account Snapshots</span></div><div class="nav" style="top:664.3px"><span id="nav6" class="t " style="letter-spacing:0.525px;">Reselling</span></div><div class="nav" style="top:736.3px"><span id="nav7" class="t " style="letter-spacing:0.267px;">Add-Ons</span></div><div class="nav" style="top:808.3px"><span id="nav8" class="t " style="letter-spacing:0.887px;">Affiliate Portal</span></div><div class="nav" style="top:880.3px"><span id="nav9" class="t " style="letter-spacing:0.660px;">Template Library</span></div><div class="nav" style="top:952.3px"><span id="nav10" class="t " style="letter-spacing:0.671px;">Partners</span></div><div class="nav" style="top:1024.3px"><span id="nav11" class="t " style="letter-spacing:0.500px;">University</span></div><div class="nav" style="top:1096.3px"><span id="nav12" class="t " style="letter-spacing:0.177px;">SaaS Education</span></div><div class="nav" style="top:1168.3px"><span id="nav13" class="t " style="letter-spacing:0.029px;">GHL Swag</span></div><div class="nav" style="top:1240.3px"><span id="nav14" class="t " style="letter-spacing:0.250px;">Ideas</span></div><div class="nav" style="top:1312.3px"><span id="nav15" class="t " style="letter-spacing:0.911px;">Mobile App</span></div><div class="nav" style="top:1384.3px"><span id="nav16" class="t " style="letter-spacing:0.714px;">App Marketplace</span></div><div class="nav" style="top:1456.3px"><span id="nav17" class="t " style="letter-spacing:0.529px;">Banners Management</span></div><div id="newb">New</div><div class="nav" style="top:1660px;letter-spacing:-0.5px"><span id="navset" class="t " style="">Settings</span></div><div id="strack"></div><div id="sthumb"></div></div><div class="abs" style="left:330px;top:1680px;width:40px;height:40px;border-radius:50%;background:#2fcf93"></div></div>
</body></html>
